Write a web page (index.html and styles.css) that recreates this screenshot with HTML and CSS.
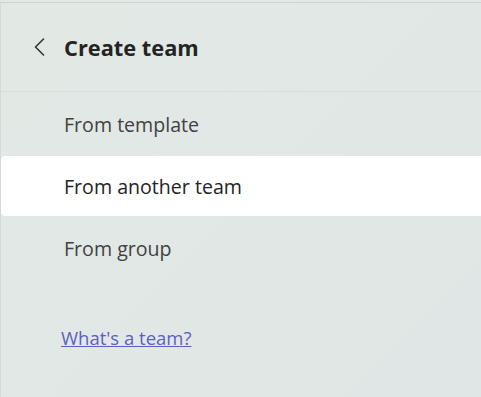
FILE: index.html
```html
<!DOCTYPE html>
<html>
<head>
    <meta charset="utf-8">
    <title>Create team</title>
    <link rel="stylesheet" href="styles.css">
</head>
<body>
    <div class="panel">
        <div class="panel-header">
            <button class="back-button" aria-label="Back">
                <svg width="12" height="18" viewBox="0 0 12 18">
                    <path d="M9.5 1 L1.5 9 L9.5 17" fill="none" stroke="#333" stroke-width="1.6" stroke-linecap="round" stroke-linejoin="round"/>
                </svg>
            </button>
            <h1>Create team</h1>
        </div>

        <div class="options">
            <div class="option">From template</div>
            <div class="option selected">From another team</div>
            <div class="option">From group</div>
        </div>

        <a class="help-link" href="#">What's a team?</a>
    </div>
</body>
</html>
```

FILE: styles.css
```css
* {
    margin: 0;
    padding: 0;
    box-sizing: border-box;
    font-family: 'Open Sans', 'Noto Sans', sans-serif;
}

body {
    background-color: #e1e8e5;
    height: 397px;
    overflow: hidden;
    padding-top: 2px;
}

.panel {
    height: 100%;
    border-top: 1px solid #cdd5d2;
    border-left: 1px solid #d3dad7;
    background: linear-gradient(135deg, #e2e9e5 0%, #e0e6e5 100%);
}

.panel-header {
    display: flex;
    align-items: center;
    height: 89px;
    padding-left: 33px;
    border-bottom: 1px solid #d8dedb;
}

.back-button {
    background: none;
    border: none;
    width: 30px;
    display: flex;
    align-items: center;
    cursor: pointer;
}

.panel-header h1 {
    font-size: 21.8px;
    font-weight: 700;
    color: #242424;
}

.options {
    display: flex;
    flex-direction: column;
    gap: 2px;
    padding-top: 2px;
}

.option {
    height: 60px;
    display: flex;
    align-items: center;
    padding-left: 63px;
    font-size: 19.6px;
    color: #424242;
    border-radius: 4px 0 0 4px;
    cursor: pointer;
}

.option.selected {
    background-color: #ffffff;
    color: #242424;
}

.help-link {
    display: inline-block;
    margin-top: 47px;
    margin-left: 60px;
    font-size: 18.5px;
    color: #5b5fc7;
    text-decoration: underline;
}
```
